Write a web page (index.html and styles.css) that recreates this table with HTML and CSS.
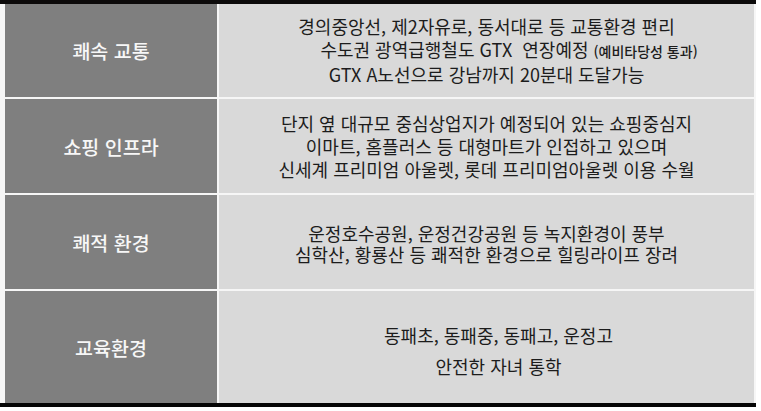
FILE: index.html
```html
<!DOCTYPE html>
<html lang="ko">
<head>
<meta charset="utf-8">
<link rel="stylesheet" href="styles.css">
</head>
<body>
<div class="sheet">
  <div class="table">
    <div class="label">쾌속 교통</div>
    <div class="desc">
      <p>경의중앙선, 제2자유로, 동서대로 등 교통환경 편리</p>
      <p class="shift">수도권 광역급행철도 GTX&nbsp; 연장예정 <small>(예비타당성 통과)</small></p>
      <p>GTX A노선으로 강남까지 20분대 도달가능</p>
    </div>
    <div class="label">쇼핑 인프라</div>
    <div class="desc">
      <p>단지 옆 대규모 중심상업지가 예정되어 있는 쇼핑중심지</p>
      <p>이마트, 홈플러스 등 대형마트가 인접하고 있으며</p>
      <p>신세계 프리미엄 아울렛, 롯데 프리미엄아울렛 이용 수월</p>
    </div>
    <div class="label">쾌적 환경</div>
    <div class="desc env">
      <p>운정호수공원, 운정건강공원 등 녹지환경이 풍부</p>
      <p>심학산, 황룡산 등 쾌적한 환경으로 힐링라이프 장려</p>
    </div>
    <div class="label">교육환경</div>
    <div class="desc wide">
      <p>동패초, 동패중, 동패고, 운정고</p>
      <p>안전한 자녀 통학</p>
    </div>
  </div>
</div>
</body>
</html>
```

FILE: styles.css
```css
html, body {
  margin: 0;
  padding: 0;
  background: #ffffff;
}

body {
  width: 761px;
  height: 411px;
  overflow: hidden;
  font-family: "Noto Sans CJK KR", "Noto Sans", sans-serif;
}

.sheet {
  width: 756px;
  border-top: 4px solid #0c0a0a;
  border-bottom: 4px solid #050505;
  background: #f6f6f6;
}

.table {
  display: grid;
  grid-template-columns: 212px 535px;
  grid-template-rows: 93px 94px 94px 112px;
  gap: 2px;
  padding: 0 2px 0 5px;
  background: #f6f6f6;
}

.label {
  background: #7f7f7f;
  color: #f7f7f7;
  font-size: 19.5px;
  font-weight: 500;
  display: flex;
  align-items: center;
  justify-content: center;
}

.desc {
  background: #d9d9d9;
  color: #1c1c1c;
  font-size: 18px;
  line-height: 23px;
  display: flex;
  flex-direction: column;
  justify-content: center;
  align-items: center;
  text-align: center;
}

.desc p {
  margin: 0;
  white-space: nowrap;
}

.desc.env {
  line-height: 21.5px;
  padding-top: 4px;
}

.desc.wide {
  line-height: 31px;
  padding-top: 8px;
  padding-left: 24px;
}

.shift {
  padding-left: 45px;
}

small {
  font-size: 14px;
  font-weight: 500;
}
```
